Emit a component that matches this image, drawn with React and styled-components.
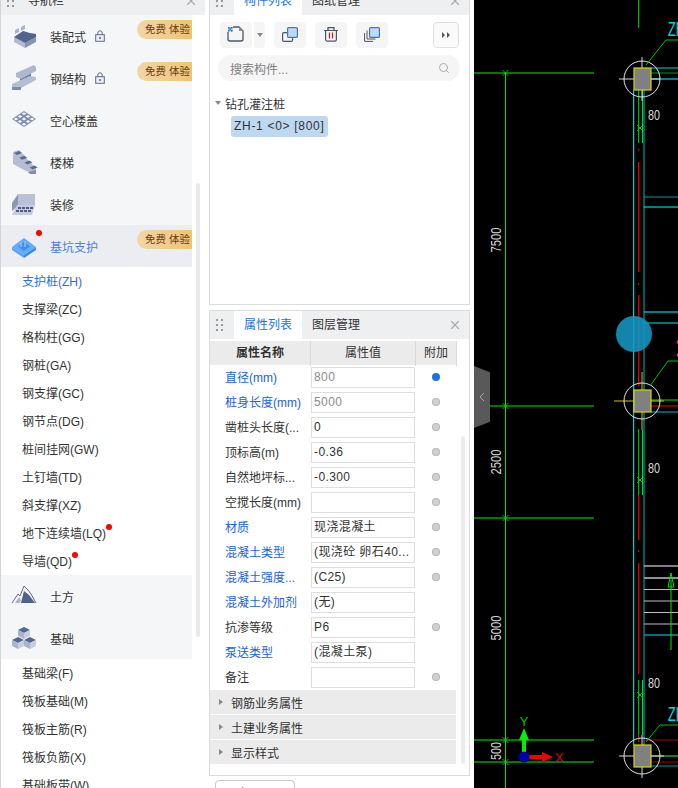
import React from "react";
import styled, { createGlobalStyle } from "styled-components";
import { X, Search } from "lucide-react";

const GlobalStyle = createGlobalStyle`
  html, body { margin: 0; padding: 0; background: #fff; overflow: hidden; }
  body { font-family: "Liberation Sans", "Noto Sans CJK SC", sans-serif; font-size: 12px; color: #333; }
  * { box-sizing: border-box; }
`;

const Page = styled.div`
  display: flex;
  width: 678px;
  height: 788px;
  overflow: hidden;
`;

/* left nav */
const NavPanel = styled.div`
  position: relative;
  flex: 0 0 205px;
  height: 810px;
  margin-top: -13px;
  border-left: 1px solid #d4d4d4;
  overflow: hidden;
`;

const PanelHeader = styled.div`
  display: flex;
  align-items: stretch;
  height: 28px;
  background: #eeeff1;
  padding-left: 6px;
  padding-right: 7px;
`;

const DragDots = styled.div`
  display: grid;
  grid-template-columns: 2px 2px;
  grid-auto-rows: 2px;
  gap: 3px 3px;
  align-self: center;
  flex: 0 0 auto;
  & > i { background: #999; display: block; }
`;

const HeaderTitle = styled.div`
  margin-left: 14px;
  flex: 1;
  line-height: 28px;
  font-size: 12px;
`;

const CloseIcon = styled(X)`
  align-self: center;
  color: #a9a9a9;
  flex: 0 0 auto;
`;

const NavRow = styled.div`
  position: relative;
  display: flex;
  align-items: center;
  width: 191px;
  height: 42px;
  padding-left: 9px;
  background: ${(p) => (p.$active ? "#ecedf1" : "#f5f6f8")};
  color: ${(p) => (p.$active ? "#4a80e0" : "#333")};
  svg.nav-icon { flex: 0 0 28px; }
  & > span { margin-left: 12px; }
`;

const LockIcon = styled.svg`
  margin-left: 9px;
  flex: 0 0 auto;
`;

const TrialBadge = styled.div`
  position: absolute;
  top: 5px;
  right: 0;
  width: 55px;
  height: 19px;
  line-height: 19px;
  padding-left: 8px;
  white-space: pre;
  border-radius: 10px 0 0 10px;
  background: linear-gradient(90deg, #f3d6a8, #eec373);
  color: #6a3c12;
  font-size: 10.5px;
`;

const RedDot = styled.i`
  position: absolute;
  width: 6px;
  height: 6px;
  border-radius: 50%;
  background: #f00;
  left: ${(p) => p.$left}px;
  top: ${(p) => p.$top}px;
`;

const SubList = styled.div`
  display: flex;
  flex-direction: column;
`;

const SubItem = styled.div`
  position: relative;
  height: 28px;
  line-height: 30px;
  padding-left: 21px;
  color: ${(p) => (p.$active ? "#1a73e8" : "#333")};
`;

const NavScroll = styled.div`
  position: absolute;
  left: 195px;
  top: 196px;
  width: 4px;
  height: 454px;
  border-radius: 2px;
  background: #e9e9e9;
`;

/* middle column */
const MiddleColumn = styled.div`
  flex: 0 0 269px;
  display: flex;
  flex-direction: column;
  gap: 5px;
  padding: 0 4px;
  margin-top: -14px;
`;

const Panel = styled.div`
  position: relative;
  flex: 0 0 ${(p) => p.$height}px;
  width: 261px;
  border: 1px solid #dcdcdc;
  background: #fff;
`;

const Tab = styled.div`
  flex: 0 0 auto;
  width: 68px;
  text-align: center;
  line-height: 29px;
  background: ${(p) => (p.$active ? "#fff" : "transparent")};
  color: ${(p) => (p.$active ? "#1a73e8" : "#333")};
`;

const TabRow = styled(PanelHeader)`
  & > ${DragDots} { margin-right: 11px; }
`;

const TabSpacer = styled.div`
  flex: 1;
`;

const Toolbar = styled.div`
  display: flex;
  align-items: center;
  gap: 9px;
  padding: 7px 10px 0;
  height: 33px;
`;

const ToolButton = styled.button`
  width: 32px;
  height: 26px;
  padding: 0;
  border: none;
  border-radius: 4px;
  background: #f5f5f5;
  display: flex;
  align-items: center;
  justify-content: center;
`;

const SplitButton = styled.button`
  width: 12px;
  height: 26px;
  padding: 0;
  margin-left: -8px;
  border: none;
  border-left: 1px solid #fff;
  border-radius: 0 4px 4px 0;
  background: #f5f5f5;
  display: flex;
  align-items: center;
  justify-content: center;
  &::after {
    content: "";
    border: 3px solid transparent;
    border-top: 4px solid #888;
    border-bottom: 0;
  }
`;

const MoreButton = styled.button`
  width: 26px;
  height: 26px;
  margin-left: auto;
  margin-right: 0;
  padding: 0;
  border: 1px solid #e0e0e0;
  border-radius: 4px;
  background: #fafafa;
  display: flex;
  align-items: center;
  justify-content: center;
`;

const SearchBox = styled.div`
  display: flex;
  align-items: center;
  justify-content: space-between;
  margin: 7px 9px 0 8px;
  height: 26px;
  padding: 0 10px 0 12px;
  border-radius: 13px;
  background: #f5f5f5;
  color: #808080;
  svg { color: #aaa; }
`;

const TreeNode = styled.div`
  display: flex;
  align-items: center;
  gap: 4px;
  margin: 13px 0 0 5px;
  height: 18px;
  &::before {
    content: "";
    border: 3px solid transparent;
    border-top: 4px solid #888;
    border-bottom: 0;
  }
`;

const TreeLeaf = styled.div`
  margin: 4px 0 0 21px;
  width: 97px;
  height: 21px;
  line-height: 21px;
  padding-left: 3px;
  border-radius: 3px;
  background: #bfd8f2;
  white-space: pre;
  letter-spacing: 0.7px;
`;

const TableHead = styled.div`
  display: grid;
  grid-template-columns: 101px 105px 41px;
  margin: 2px 0 0;
  height: 24px;
  background: #ebebeb;
  width: 247px;
`;

const HeadCell = styled.div`
  text-align: center;
  line-height: 25px;
  font-weight: ${(p) => (p.$bold ? 700 : 400)};
  border-right: 1px solid #d9d9d9;
  color: #333;
`;

const PropRow = styled.div`
  display: grid;
  grid-template-columns: 101px 104px 42px;
  align-items: center;
  height: 25px;
`;

const PropName = styled.div`
  padding: 0 0 2px 15px;
  white-space: nowrap;
  color: ${(p) => (p.$link ? "#1a62e0" : "#333")};
`;

const PropValue = styled.div`
  height: 21px;
  line-height: 19px;
  padding-left: 2px;
  border: 1px solid #dedede;
  white-space: nowrap;
  overflow: hidden;
  letter-spacing: 0.4px;
  color: ${(p) => (p.$muted ? "#8c8c8c" : "#333")};
`;

const Radio = styled.i`
  justify-self: center;
  width: 8px;
  height: 8px;
  margin-bottom: 2px;
  border-radius: 50%;
  background: ${(p) => (p.$on ? "#1a73e8" : "#d0d0d0")};
  box-shadow: ${(p) => (p.$on ? "none" : "inset 0 0 0 1px #bcbcbc")};
`;

const GroupRow = styled.div`
  display: flex;
  align-items: center;
  gap: 8px;
  width: 246px;
  height: 24px;
  margin: 0 0 1px;
  padding-left: 9px;
  background: #ebebeb;
  &::before {
    content: "";
    border: 3px solid transparent;
    border-left: 4px solid #888;
    border-right: 0;
  }
`;

const PropScroll = styled.div`
  position: absolute;
  left: 251px;
  top: 125px;
  width: 4px;
  height: 328px;
  border-radius: 2px;
  background: #ececec;
`;

const BottomButton = styled.button`
  flex: 0 0 auto;
  align-self: flex-start;
  width: 80px;
  height: 24px;
  margin: -1px 0 0 6px;
  padding: 0;
  border: 1px solid #c8c8c8;
  border-radius: 4px;
  background: #fff;
  font: inherit;
  color: #333;
`;

/* cad canvas */
const Canvas = styled.div`
  position: relative;
  flex: 1;
  height: 788px;
  background: #000;
  overflow: hidden;
  svg { display: block; }
`;

const CollapseHandle = styled.div`
  position: absolute;
  left: 0;
  top: 366px;
  width: 16px;
  height: 62px;
  display: flex;
  align-items: center;
  justify-content: center;
  background: #595959;
  clip-path: polygon(0 0, 100% 10%, 100% 90%, 0 100%);
`;

const CursorBlob = styled.div`
  position: absolute;
  left: 142px;
  top: 316px;
  width: 36px;
  height: 36px;
  border-radius: 50%;
  background: rgba(22, 150, 195, 0.88);
`;

const Dots = () => (
  <DragDots>
    {[0, 1, 2, 3, 4, 5].map((i) => (
      <i key={i} />
    ))}
  </DragDots>
);

const Lock = () => (
  <LockIcon width="10" height="12" viewBox="0 0 10 12">
    <path d="M2.8 5V3a2.2 2.2 0 0 1 4.4 0v2" fill="none" stroke="#5a6b90" strokeWidth="1" />
    <rect x="0.7" y="4.7" width="8.6" height="6.6" fill="#eef0f5" stroke="#5a6b90" strokeWidth="1" />
    <circle cx="5" cy="8" r="1.1" fill="#5a6b90" />
  </LockIcon>
);

const Icon = ({ children }) => (
  <svg className="nav-icon" width="28" height="28" viewBox="0 0 28 28">
    {children}
  </svg>
);

const PrefabIcon = () => (
  <Icon>
    <polygon points="5,8 9,6 9,10 5,12" fill="#a9b4cc" />
    <polygon points="11,5 15,3 15,7 11,9" fill="#a9b4cc" />
    <polygon points="4,15 15,21 15,26 4,20" fill="#b0bad0" />
    <polygon points="15,21 26,15 26,20 15,26" fill="#8793b0" />
    <polygon points="4,15 13,9 20,11 26,12 26,15 15,21" fill="#52648c" />
  </Icon>
);

const SteelIcon = () => (
  <Icon>
    <polygon points="10,13 21,8 21,17 10,22" fill="#6f7e9f" />
    <polygon points="6,9 24,1 26,3 26,7 11,15 6,13" fill="#aeb8cf" />
    <polygon points="2,20 20,12 26,13 26,16 11,24 2,24" fill="#b4bed2" />
    <polygon points="2,23 11,23 11,26 2,26" fill="#7f8cab" />
  </Icon>
);

const SlabIcon = () => {
  const holes = [];
  for (let i = 0; i < 3; i++) {
    for (let j = 0; j < 3; j++) {
      const cx = 14 + (i - j) * 4;
      const cy = 13 + (i + j - 2) * 2.6;
      holes.push(
        <polygon key={`${i}-${j}`} points={`${cx - 2.4},${cy} ${cx},${cy - 1.5} ${cx + 2.4},${cy} ${cx},${cy + 1.5}`} fill="#f0f2f6" />
      );
    }
  }
  return (
    <Icon>
      <polygon points="2,13 14,5 26,13 14,21" fill="#7d8baa" />
      {holes}
    </Icon>
  );
};

const StairIcon = () => (
  <Icon>
    <polygon points="3,4 9,2 14,7 18,12 26,20 26,26 16,23 3,16" fill="#b4bdd1" />
    {[0, 1, 2, 3].map((k) => {
      const dx = k * 5.2;
      const dy = k * 4.8;
      return <polygon key={k} points={`${4 + dx},${5 + dy} ${9 + dx},${3 + dy} ${12 + dx},${5 + dy} ${7 + dx},${7 + dy}`} fill="#5a6b90" />;
    })}
    <polygon points="18,24 26,22 26,26 20,26" fill="#7f8cab" />
  </Icon>
);

const FinishIcon = () => (
  <Icon>
    <polygon points="8,4 25,4 25,15 8,15" fill="#b8c1d6" />
    <polygon points="2,13 8,4 8,16 2,21" fill="#8b98b5" />
    <polygon points="7,15 25,15 22,25 2,25" fill="#c4cbdc" />
    <path d="M8 18h3M12 18h3M16 18h3M20 18h3M6 21h3M10 21h3M14 21h3M18 21h3" stroke="#4e5f86" strokeWidth="2" />
  </Icon>
);

const PitIcon = () => (
  <Icon>
    <polygon points="2,15 14,6 26,15 14,23" fill="#62acf8" />
    <polygon points="2,15 14,23 14,26 2,18" fill="#58a2f4" />
    <polygon points="14,23 26,15 26,18 14,26" fill="#3a88ea" />
    <polygon points="8,14.5 14,10 20,14.5 14,19" fill="#3e8eee" />
    <path d="M11 10v5M15 9v6" stroke="#8cc3fb" strokeWidth="1.5" />
  </Icon>
);

const MountainIcon = () => (
  <Icon>
    <path d="M2 21 8 12 10 14 14 4 18 8 21 12 26 21" fill="none" stroke="#5a6b90" strokeWidth="1" />
    <polygon points="11,21 14,9 19,13 25,21" fill="#4e628e" />
    <polygon points="5,21 9,15 11,18 10,21" fill="#a9b4cc" />
  </Icon>
);

const Cube = ({ x, y }) => (
  <>
    <polygon points={`${x - 6},${y - 3} ${x},${y - 6} ${x + 6},${y - 3} ${x},${y}`} fill="#55678f" />
    <polygon points={`${x - 6},${y - 3} ${x},${y} ${x},${y + 6} ${x - 6},${y + 3}`} fill="#aab5cc" />
    <polygon points={`${x + 6},${y - 3} ${x},${y} ${x},${y + 6} ${x + 6},${y + 3}`} fill="#c6cedd" />
  </>
);

const FoundationIcon = () => (
  <Icon>
    <Cube x={14} y={9} />
    <Cube x={8} y={19} />
    <Cube x={20} y={19} />
  </Icon>
);

const ToolSvg = ({ children }) => (
  <svg width="32" height="26" viewBox="0 0 32 26" fill="none">
    {children}
  </svg>
);

const NewIcon = () => (
  <ToolSvg>
    <path d="M8 10V17a2 2 0 0 0 2 2H21a2 2 0 0 0 2-2V9L19 5H13" stroke="#4b5568" strokeWidth="1.3" />
    <polygon points="19,5 23,9 19,9" fill="#8a8f9a" />
    <rect x="8" y="5" width="4.5" height="4.5" fill="#9cc2f5" />
    <path d="M8 5h1.5v1.5H8zM11 5h1.5v1.5H11zM9.5 6.5H11V8H9.5zM8 8h1.5v1.5H8zM11 8h1.5v1.5H11z" fill="#1a6fe0" />
  </ToolSvg>
);

const CopyIcon = () => (
  <ToolSvg>
    <rect x="8.6" y="10.6" width="10" height="8.8" rx="1.5" stroke="#4b5568" strokeWidth="1.2" />
    <rect x="13.6" y="5.6" width="9.8" height="9.8" rx="1" fill="#c5d9f5" stroke="#2f7be0" strokeWidth="1.2" />
  </ToolSvg>
);

const TrashIcon = () => (
  <ToolSvg>
    <path d="M9 8.5H23M13 8.5V5.6H19V8.5" stroke="#4b5568" strokeWidth="1.2" />
    <path d="M10.6 8.5V17.5a1.6 1.6 0 0 0 1.6 1.6H19.8a1.6 1.6 0 0 0 1.6-1.6V8.5" stroke="#4b5568" strokeWidth="1.2" />
    <path d="M14.5 10.5V16.5M17.5 10.5V16.5" stroke="#e01818" strokeWidth="1.2" />
  </ToolSvg>
);

const CopyAllIcon = () => (
  <ToolSvg>
    <path d="M8.6 11V19.4H17" stroke="#4b5568" strokeWidth="1" />
    <path d="M11 8.5V17H19.5" stroke="#4b5568" strokeWidth="1" />
    <rect x="13.6" y="5.6" width="9.8" height="9.8" rx="1" fill="#c5d9f5" stroke="#2f7be0" strokeWidth="1.2" />
  </ToolSvg>
);

const navTop = [
  { name: "装配式", icon: PrefabIcon, lock: true, trial: true },
  { name: "钢结构", icon: SteelIcon, lock: true, trial: true },
  { name: "空心楼盖", icon: SlabIcon },
  { name: "楼梯", icon: StairIcon },
  { name: "装修", icon: FinishIcon },
];

const pitItems = ["支护桩(ZH)", "支撑梁(ZC)", "格构柱(GG)", "钢桩(GA)", "钢支撑(GC)", "钢节点(DG)", "桩间挂网(GW)", "土钉墙(TD)", "斜支撑(XZ)", "地下连续墙(LQ)", "导墙(QD)"];
const baseItems = ["基础梁(F)", "筏板基础(M)", "筏板主筋(R)", "筏板负筋(X)", "基础板带(W)"];

const props = [
  { name: "直径(mm)", value: "800", link: true, muted: true, on: true, radio: true },
  { name: "桩身长度(mm)", value: "5000", link: true, muted: true, radio: true },
  { name: "凿桩头长度(...", value: "0", radio: true },
  { name: "顶标高(m)", value: "-0.36", radio: true },
  { name: "自然地坪标...", value: "-0.300", radio: true },
  { name: "空搅长度(mm)", value: "", radio: true },
  { name: "材质", value: "现浇混凝土", link: true, radio: true },
  { name: "混凝土类型", value: "(现浇砼 卵石40...", link: true, radio: true },
  { name: "混凝土强度...", value: "(C25)", link: true, radio: true },
  { name: "混凝土外加剂", value: "(无)", link: true },
  { name: "抗渗等级", value: "P6", radio: true },
  { name: "泵送类型", value: "(混凝土泵)", link: true },
  { name: "备注", value: "", radio: true },
];

const G = "#00e600";
const DG = "#00a000";
const C = "#00ffff";
const T = "#009aa0";
const R = "#f00000";
const W = "#d8d8d8";
const Y = "#c8c800";

const lines = [
  [164.7, 0, 164.7, 28, G, 1],
  [0, 73, 120, 73, DG, 1.4],
  [31.5, 73, 31.5, 788, G, 1],
  [0, 406, 120, 406, G, 1.2],
  [0, 518, 120, 518, DG, 1.4],
  [0, 740, 120, 740, DG, 1.4],
  [0, 762, 120, 762, DG, 1.6],
  [159.7, 90, 159.7, 745, C, 1],
  [170, 90, 170, 745, T, 1.2],
  [164.7, 90, 164.7, 143, G, 1],
  [168.5, 90, 168.5, 143, G, 1],
  [164.7, 429, 164.7, 495, G, 1],
  [168.5, 430, 168.5, 495, G, 1],
  [164.7, 680, 164.7, 735, G, 1],
  [168.5, 680, 168.5, 735, G, 1],
  [164.7, 162, 164.7, 272, R, 1.2],
  [164.7, 295, 164.7, 386, R, 1.2],
  [164.7, 495, 164.7, 540, R, 1.2],
  [164.7, 563, 164.7, 674, R, 1.2],
  [164.7, 735, 164.7, 742, R, 1.2],
  [164.7, 149, 164.7, 151, R, 1],
  [164.7, 283, 164.7, 285, R, 1],
  [164.7, 550, 164.7, 552, R, 1],
  [177, 68, 204, 68, T, 1.4],
  [177, 73, 204, 73, DG, 1],
  [177, 79, 204, 79, C, 1],
  [170, 197, 204, 197, T, 1.2],
  [170, 207, 204, 207, C, 1],
  [170, 312, 204, 312, C, 1],
  [170, 323, 204, 323, T, 1.4],
  [177, 400, 204, 400, G, 1],
  [177, 406, 204, 406, R, 1],
  [177, 412, 204, 412, T, 1.2],
  [170, 566, 204, 566, "#fff", 1],
  [170, 578, 204, 578, "#909090", 2],
  [170, 589.5, 204, 589.5, "#c0c0c0", 1],
  [170, 601, 204, 601, "#c0c0c0", 1],
  [170, 612.5, 204, 612.5, "#c0c0c0", 1],
  [170, 624, 204, 624, "#c0c0c0", 1],
  [170, 635, 204, 635, T, 1.4],
  [197, 580, 197, 650, G, 1],
  [170, 740, 204, 740, "#a00000", 1],
  [177, 756, 204, 756, "#30f060", 1],
  [177, 762, 204, 762, "#a00000", 1],
  [170, 766, 204, 766, T, 1.2],
];

const slashes = [[31.5, 73], [31.5, 406], [31.5, 518], [31.5, 740], [31.5, 762], [166, 128], [166, 480], [166, 695]];

const dims = [
  ["7500", 240, 25],
  ["2500", 462, 25],
  ["5000", 628, 25],
  ["500", 751, 18],
];

const Pile = ({ y, cross, span }) => (
  <g>
    <line x1={span[0]} y1={y} x2={span[1]} y2={y} stroke={cross} />
    <line x1="168" y1={span[2]} x2="168" y2={span[3]} stroke={cross} />
    <rect x="160" y={y - 11} width="17" height="22" fill="#808080" stroke="#d8d800" strokeWidth="1.2" />
    <circle cx="168" cy={y} r="18" fill="none" stroke="#e4e4e4" strokeWidth="1" />
  </g>
);

const CadDrawing = () => (
  <svg width="204" height="788" viewBox="0 0 204 788">
    {lines.map(([x1, y1, x2, y2, c, w], i) => (
      <line key={i} x1={x1} y1={y1} x2={x2} y2={y2} stroke={c} strokeWidth={w} />
    ))}
    {slashes.map(([x, y], i) => (
      <path key={i} d={`M${x - 3} ${y - 3}L${x + 3} ${y + 3}M${x - 3} ${y + 3}L${x + 3} ${y - 3}`} stroke={G} strokeWidth="0.8" />
    ))}
    <Pile y={79} cross={W} span={[145, 186, 57, 101]} />
    <Pile y={401} cross={Y} span={[140, 190, 372, 430]} />
    <Pile y={756} cross={W} span={[145, 190, 735, 778]} />
    <path d="M172 65L192 40H204M176 386L194 361H204M172 742L186 725H204" fill="none" stroke="#00c000" strokeWidth="1" />
    <path d="M197 573L194 587H200Z" fill="none" stroke={G} strokeWidth="1" />
    <text x="194" y="36" fontSize="21" fill="#00dcdc" textLength="17" lengthAdjust="spacingAndGlyphs" fontFamily="Liberation Sans">ZH</text>
    <text x="194" y="721" fontSize="21" fill="#00dcdc" textLength="17" lengthAdjust="spacingAndGlyphs" fontFamily="Liberation Sans">ZH</text>
    <text x="174" y="120" fontSize="14" fill={W} textLength="12" lengthAdjust="spacingAndGlyphs" fontFamily="Liberation Sans">80</text>
    <text x="174" y="473" fontSize="14" fill={W} textLength="12" lengthAdjust="spacingAndGlyphs" fontFamily="Liberation Sans">80</text>
    <text x="174" y="688" fontSize="14" fill={W} textLength="12" lengthAdjust="spacingAndGlyphs" fontFamily="Liberation Sans">80</text>
    {dims.map(([t, y, len]) => (
      <text key={t} transform={`translate(27 ${y}) rotate(-90)`} textAnchor="middle" fontSize="14" fill={W} textLength={len} lengthAdjust="spacingAndGlyphs" fontFamily="Liberation Sans">{t}</text>
    ))}
    <rect x="48" y="738" width="4" height="15" fill="#00f000" />
    <polygon points="50,728 45,740 55,740" fill="#00f000" />
    <text x="50" y="726" fontSize="13" fill="#00c000" textAnchor="middle" fontFamily="Liberation Sans">Y</text>
    <rect x="52" y="755" width="17" height="4" fill="#f00000" />
    <polygon points="79,757 68,752 68,762" fill="#f00000" />
    <text x="81" y="762" fontSize="13" fill="#e00000" fontFamily="Liberation Sans">X</text>
    <circle cx="50" cy="757" r="5.5" fill="#0000b0" />
    <path d="M203 342h1M203 355h1" stroke="#ff00ff" strokeWidth="3" />
  </svg>
);

export default function App() {
  return (
    <Page>
      <GlobalStyle />
      <NavPanel>
        <PanelHeader>
          <Dots />
          <HeaderTitle>导航栏</HeaderTitle>
          <CloseIcon size={14} />
        </PanelHeader>
        {navTop.map((n) => (
          <NavRow key={n.name}>
            <n.icon />
            <span>{n.name}</span>
            {n.lock && <Lock />}
            {n.trial && <TrialBadge>免费 体验</TrialBadge>}
          </NavRow>
        ))}
        <NavRow $active>
          <PitIcon />
          <span>基坑支护</span>
          <RedDot $left={35} $top={5} />
          <TrialBadge>免费 体验</TrialBadge>
        </NavRow>
        <SubList>
          {pitItems.map((t, i) => (
            <SubItem key={t} $active={i === 0}>
              {t}
              {t === "地下连续墙(LQ)" && <RedDot $left={105} $top={5} />}
              {t === "导墙(QD)" && <RedDot $left={71} $top={5} />}
            </SubItem>
          ))}
        </SubList>
        <NavRow>
          <MountainIcon />
          <span>土方</span>
        </NavRow>
        <NavRow>
          <FoundationIcon />
          <span>基础</span>
        </NavRow>
        <SubList>
          {baseItems.map((t) => (
            <SubItem key={t}>{t}</SubItem>
          ))}
        </SubList>
        <NavScroll />
      </NavPanel>

      <MiddleColumn>
        <Panel $height={319}>
          <TabRow>
            <Dots />
            <Tab $active>构件列表</Tab>
            <Tab>图纸管理</Tab>
            <TabSpacer />
            <CloseIcon size={14} />
          </TabRow>
          <Toolbar>
            <ToolButton><NewIcon /></ToolButton>
            <SplitButton />
            <ToolButton><CopyIcon /></ToolButton>
            <ToolButton><TrashIcon /></ToolButton>
            <ToolButton><CopyAllIcon /></ToolButton>
            <MoreButton>
              <svg width="10" height="8" viewBox="0 0 10 8">
                <path d="M1 1l3 3-3 3zM6 1l3 3-3 3z" fill="#555" />
              </svg>
            </MoreButton>
          </Toolbar>
          <SearchBox>
            <span>搜索构件...</span>
            <Search size={12} />
          </SearchBox>
          <TreeNode>钻孔灌注桩</TreeNode>
          <TreeLeaf>{"ZH-1 <0> [800]"}</TreeLeaf>
        </Panel>

        <Panel $height={466}>
          <TabRow>
            <Dots />
            <Tab $active>属性列表</Tab>
            <Tab>图层管理</Tab>
            <TabSpacer />
            <CloseIcon size={14} />
          </TabRow>
          <TableHead>
            <HeadCell $bold>属性名称</HeadCell>
            <HeadCell>属性值</HeadCell>
            <HeadCell>附加</HeadCell>
          </TableHead>
          {props.map((p) => (
            <PropRow key={p.name}>
              <PropName $link={p.link}>{p.name}</PropName>
              <PropValue $muted={p.muted}>{p.value}</PropValue>
              {p.radio && <Radio $on={p.on} />}
            </PropRow>
          ))}
          <GroupRow>钢筋业务属性</GroupRow>
          <GroupRow>土建业务属性</GroupRow>
          <GroupRow>显示样式</GroupRow>
          <PropScroll />
        </Panel>
        <BottomButton>上一层</BottomButton>
      </MiddleColumn>

      <Canvas>
        <CadDrawing />
        <CursorBlob />
        <CollapseHandle>
          <svg width="6" height="10" viewBox="0 0 6 10">
            <path d="M5 1L1 5l4 4" fill="none" stroke="#a8a8a8" strokeWidth="1" />
          </svg>
        </CollapseHandle>
      </Canvas>
    </Page>
  );
}
